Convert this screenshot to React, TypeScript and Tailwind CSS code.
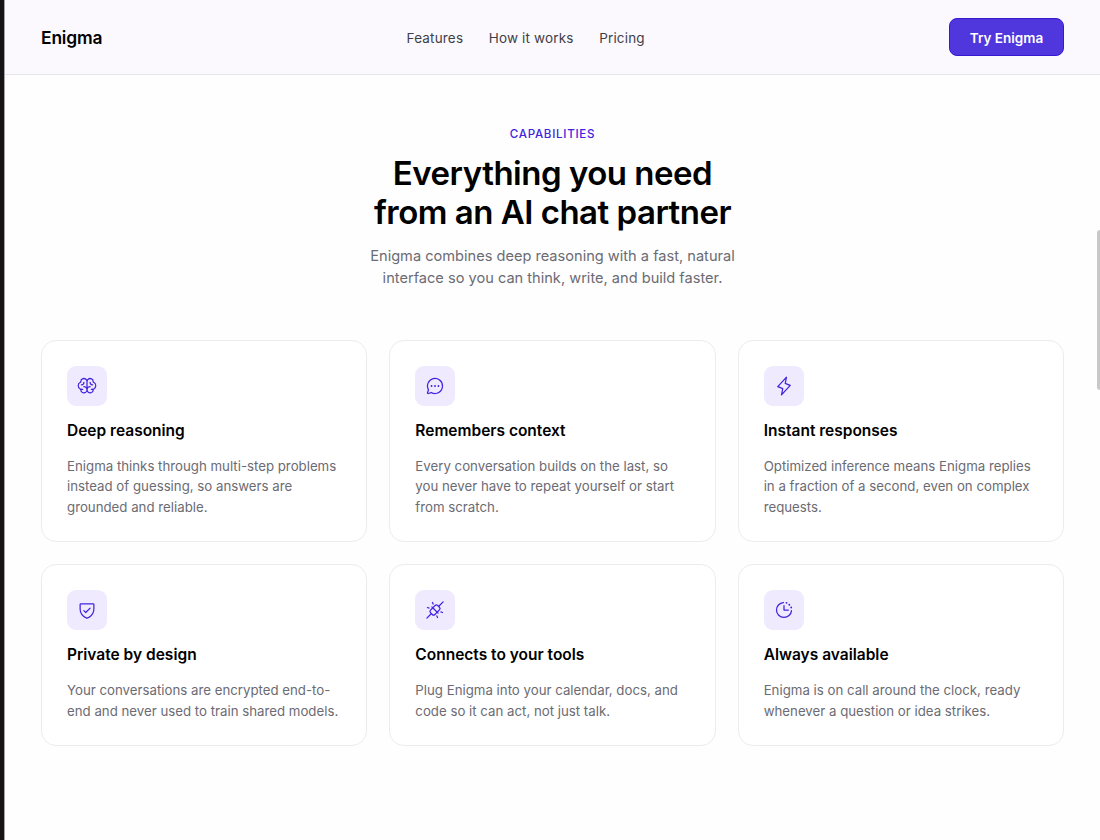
import type { IconType } from "react-icons";
import {
  PiBrain,
  PiChatCircleDots,
  PiClockCountdown,
  PiLightning,
  PiPlugsConnected,
  PiShieldCheck,
} from "react-icons/pi";

interface Feature {
  icon: IconType;
  title: string;
  description: string;
}

const navItems = ["Features", "How it works", "Pricing"];

const features: Feature[] = [
  {
    icon: PiBrain,
    title: "Deep reasoning",
    description:
      "Enigma thinks through multi-step problems instead of guessing, so answers are grounded and reliable.",
  },
  {
    icon: PiChatCircleDots,
    title: "Remembers context",
    description:
      "Every conversation builds on the last, so you never have to repeat yourself or start from scratch.",
  },
  {
    icon: PiLightning,
    title: "Instant responses",
    description:
      "Optimized inference means Enigma replies in a fraction of a second, even on complex requests.",
  },
  {
    icon: PiShieldCheck,
    title: "Private by design",
    description:
      "Your conversations are encrypted end-to-end and never used to train shared models.",
  },
  {
    icon: PiPlugsConnected,
    title: "Connects to your tools",
    description:
      "Plug Enigma into your calendar, docs, and code so it can act, not just talk.",
  },
  {
    icon: PiClockCountdown,
    title: "Always available",
    description:
      "Enigma is on call around the clock, ready whenever a question or idea strikes.",
  },
];

const Header = () => (
  <header className="flex h-[75px] items-center justify-between border-b border-[#e6e5ea] bg-[#fbf9fe] px-9">
    <a
      href="#"
      className="pt-0.5 text-[17.4px] font-semibold tracking-[-0.15px] text-black"
    >
      Enigma
    </a>
    <nav className="flex gap-[25.5px] pt-[3px] text-[13.5px] tracking-[0.17px] text-[#3f3f46]">
      {navItems.map((item) => (
        <a href="#" key={item}>
          {item}
        </a>
      ))}
    </nav>
    <button className="h-[38px] w-[115px] rounded-lg border border-[#3719d0] bg-[#4f37dd] pt-0.5 text-[13.5px] font-semibold text-white">
      Try Enigma
    </button>
  </header>
);

const FeatureCard = ({ icon: Icon, title, description }: Feature) => (
  <div className="rounded-[15px] border border-[#ececef] bg-white px-[25px] pt-[25px] pb-6">
    <div className="flex size-10 items-center justify-center rounded-[9px] bg-[#efeafe] text-[#4422e0]">
      <Icon size={20} />
    </div>
    <h3 className="mt-3.5 text-[15.5px] leading-[22px] font-semibold text-black">
      {title}
    </h3>
    <p className="mt-3.5 text-[13.25px] leading-[20.4px] text-[#6b6b73]">
      {description}
    </p>
  </div>
);

export default function App() {
  return (
    <div className="flex h-[840px] overflow-hidden bg-[#fefefe] font-['Inter',sans-serif] text-black">
      <div className="w-[5px] shrink-0 border-r border-[#a5a3a5] bg-[#151314]" />
      <div className="relative min-w-0 flex-1">
        <Header />
        <main className="px-9 pt-[50px]">
          <div className="text-center">
            <p className="text-[11.6px] leading-[18px] font-medium tracking-[0.7px] text-[#4422e0]">
              CAPABILITIES
            </p>
            <h2 className="mt-[11px] text-[33px] leading-[39px] font-semibold tracking-[-0.5px]">
              Everything you need
              <br />
              from an AI chat partner
            </h2>
            <p className="mt-[13px] text-[14.6px] leading-[22px] text-[#6b6b73]">
              Enigma combines deep reasoning with a fast, natural
              <br />
              interface so you can think, write, and build faster.
            </p>
          </div>
          <div className="mt-[51px] grid grid-cols-3 gap-[22px]">
            {features.map((feature) => (
              <FeatureCard key={feature.title} {...feature} />
            ))}
          </div>
        </main>
        {/* scrollbar thumb */}
        <div className="absolute top-[230px] right-0 h-40 w-[3px] rounded-l-sm bg-[#c8c8c8]" />
      </div>
    </div>
  );
}
